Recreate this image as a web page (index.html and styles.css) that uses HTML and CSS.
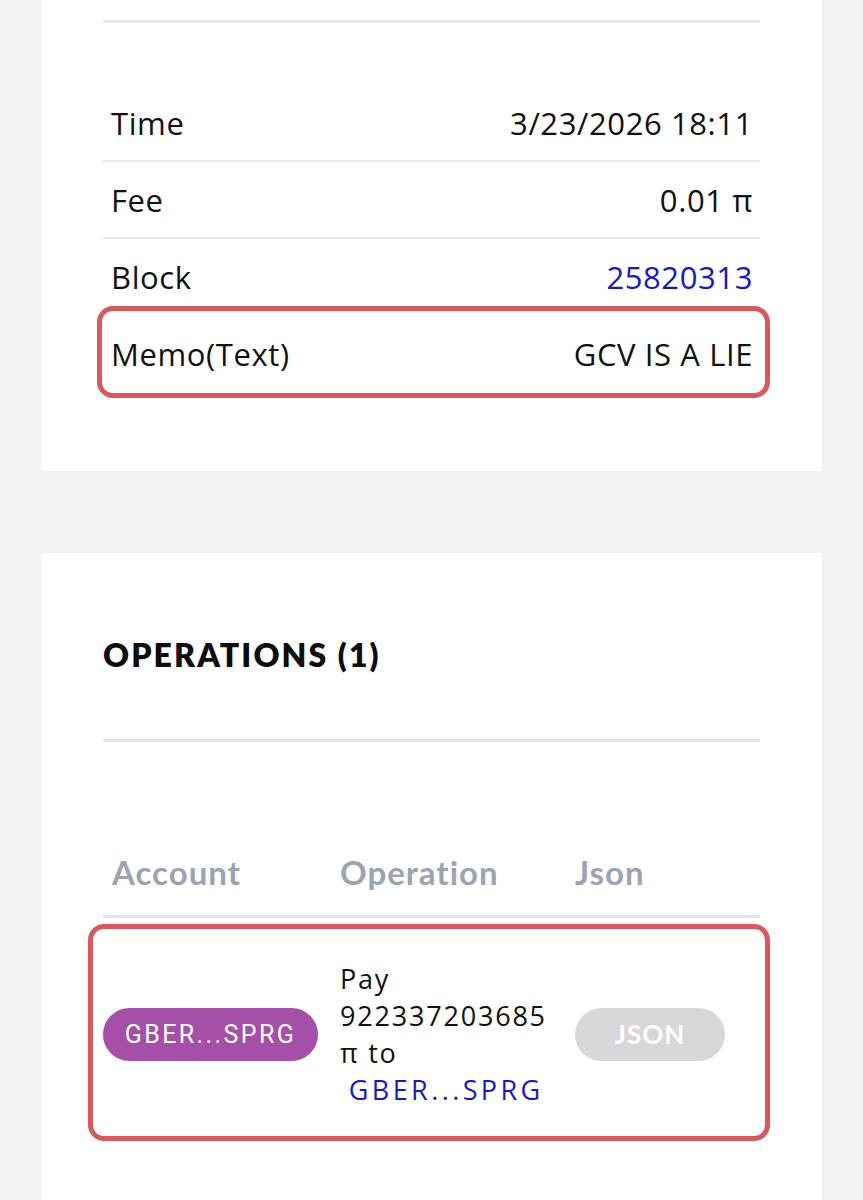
FILE: index.html
```html
<!DOCTYPE html>
<html>
<head>
<meta charset="utf-8">
<link rel="stylesheet" href="styles.css">
</head>
<body>
<div class="page">
  <section class="card card-details">
    <div class="divider"></div>
    <div class="rows">
      <div class="row"><span class="label">Time</span><span class="value">3/23/2026 18:11</span></div>
      <div class="row"><span class="label">Fee</span><span class="value">0.01 π</span></div>
      <div class="row row-before-mark"><span class="label">Block</span><a class="value link">25820313</a></div>
      <div class="row row-last marked"><span class="label">Memo(Text)</span><span class="value">GCV IS A LIE</span></div>
    </div>
  </section>

  <section class="card card-ops">
    <h2 class="ops-title">OPERATIONS (1)</h2>
    <div class="divider divider-ops"></div>
    <div class="table">
      <div class="thead">
        <div class="th th-account">Account</div>
        <div class="th">Operation</div>
        <div class="th">Json</div>
      </div>
      <div class="trow marked-op">
        <div class="td"><span class="pill pill-account">GBER...SPRG</span></div>
        <div class="td op-text">Pay<br>922337203685<br>π to<br>&nbsp;<a class="link op-link">GBER...SPRG</a></div>
        <div class="td"><span class="pill pill-json">JSON</span></div>
      </div>
    </div>
  </section>
</div>
</body>
</html>
```

FILE: styles.css
```css
html, body {
  margin: 0;
  padding: 0;
  background: #f2f2f2;
}
body {
  font-family: "Open Sans", "Liberation Sans", sans-serif;
  color: #111;
}
.page {
  width: 863px;
  height: 1200px;
  overflow: hidden;
}
.card {
  background: #fff;
  margin: 0 41px;
  padding: 0 62px;
}
.card-details {
  padding-top: 20px;
  padding-bottom: 80px;
}
.divider {
  height: 3px;
  background: #e6e6e8;
}
.rows {
  margin-top: 62px;
}
.row {
  display: flex;
  justify-content: space-between;
  align-items: center;
  height: 75px;
  padding: 0 7px 0 8px;
  border-bottom: 2px solid #e8e8e8;
  font-size: 31px;
  letter-spacing: 0.6px;
}
.row-before-mark {
  border-bottom-color: transparent;
}
.row-last {
  border-bottom: none;
}
.link {
  color: #1818c4;
  text-decoration: none;
}
.marked, .marked-op {
  position: relative;
}
.marked::after {
  content: "";
  position: absolute;
  left: -6px;
  right: -10px;
  top: -10px;
  bottom: -7px;
  border: 5px solid #d9575d;
  border-radius: 16px;
  pointer-events: none;
}
.card-ops {
  margin-top: 82px;
  padding-top: 77px;
  height: 700px;
}
.ops-title {
  margin: 0;
  font-family: Lato, "Open Sans", sans-serif;
  font-weight: 800;
  font-size: 32px;
  letter-spacing: 2.1px;
  line-height: 50px;
  color: #0d0d0d;
}
.divider-ops {
  margin-top: 59px;
}
.table {
  margin-top: 109px;
}
.thead, .trow {
  display: grid;
  grid-template-columns: 237px 235px 1fr;
}
.thead {
  border-bottom: 3px solid #e6e6ea;
  padding-bottom: 22px;
}
.th {
  font-family: Lato, "Open Sans", sans-serif;
  font-weight: 700;
  font-size: 33px;
  letter-spacing: 1px;
  line-height: 42px;
  color: #9aa4b3;
}
.th-account {
  padding-left: 9px;
}
.trow {
  align-items: center;
  padding: 42px 0;
}
.marked-op::after {
  content: "";
  position: absolute;
  left: -15px;
  right: -10px;
  top: 6px;
  bottom: 9px;
  border: 5px solid #d9575d;
  border-radius: 16px;
  pointer-events: none;
}
.op-text {
  font-size: 27px;
  letter-spacing: 1.8px;
  line-height: 37px;
}
.op-link {
  letter-spacing: 3.4px;
}
.pill {
  display: inline-flex;
  align-items: center;
  justify-content: center;
  height: 53px;
  border-radius: 27px;
  color: #fff;
}
.pill-account {
  width: 215px;
  background: #a64fa8;
  font-family: Roboto, "Open Sans", sans-serif;
  font-size: 25px;
  letter-spacing: 2.4px;
}
.pill-json {
  width: 150px;
  background: #d8d5db;
  font-family: Lato, "Open Sans", sans-serif;
  font-size: 26px;
  font-weight: 700;
  letter-spacing: 1px;
}
```
